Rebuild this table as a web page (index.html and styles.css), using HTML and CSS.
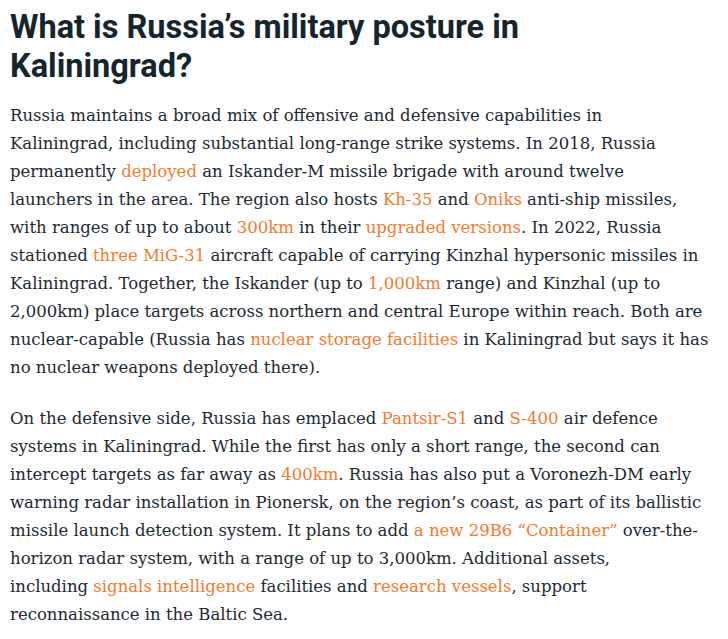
FILE: index.html
```html
<!DOCTYPE html>
<html lang="en">
<head>
<meta charset="utf-8">
<title>What is Russia’s military posture in Kaliningrad?</title>
<link rel="stylesheet" href="styles.css">
</head>
<body>
<article class="article">
<h2 class="title">What is Russia’s military posture in<br>Kaliningrad?</h2>
<p class="para">Russia maintains a broad mix of offensive and defensive capabilities in<br>Kaliningrad, including substantial long-range strike systems. In 2018, Russia<br>permanently <a class="link" href="#">deployed</a> an Iskander-M missile brigade with around twelve<br>launchers in the area. The region also hosts <a class="link" href="#">Kh-35</a> and <a class="link" href="#">Oniks</a> anti-ship missiles,<br>with ranges of up to about <a class="link" href="#">300km</a> in their <a class="link" href="#">upgraded versions</a>. In 2022, Russia<br>stationed <a class="link" href="#">three MiG-31</a> aircraft capable of carrying Kinzhal hypersonic missiles in<br>Kaliningrad. Together, the Iskander (up to <a class="link" href="#">1,000km</a> range) and Kinzhal (up to<br>2,000km) place targets across northern and central Europe within reach. Both are<br>nuclear-capable (Russia has <a class="link" href="#">nuclear storage facilities</a> in Kaliningrad but says it has<br>no nuclear weapons deployed there).</p>
<p class="para">On the defensive side, Russia has emplaced <a class="link" href="#">Pantsir-S1</a> and <a class="link" href="#">S-400</a> air defence<br>systems in Kaliningrad. While the first has only a short range, the second can<br>intercept targets as far away as <a class="link" href="#">400km</a>. Russia has also put a Voronezh-DM early<br>warning radar installation in Pionersk, on the region’s coast, as part of its ballistic<br>missile launch detection system. It plans to add <a class="link" href="#">a new 29B6 “Container”</a> over-the-<br>horizon radar system, with a range of up to 3,000km. Additional assets,<br>including <a class="link" href="#">signals intelligence</a> facilities and <a class="link" href="#">research vessels</a>, support<br>reconnaissance in the Baltic Sea.</p>
</article>
</body>
</html>
```
FILE: styles.css
```css
html, body {
  margin: 0;
  padding: 0;
  background: #ffffff;
}
.article {
  padding: 8px 10px 0 10px;
  color: #1b2a33;
}
.title {
  font-family: Roboto, "Liberation Sans", sans-serif;
  font-weight: 700;
  font-size: 32.5px;
  line-height: 39px;
  margin: 0 0 16px 0;
  color: #15252e;
  white-space: nowrap;
}
.para {
  font-family: "DejaVu Serif", serif;
  font-size: 16.5px;
  line-height: 28px;
  margin: 0 0 23px 0;
  white-space: nowrap;
}
.link {
  color: #f27a30;
  text-decoration: none;
}
```
